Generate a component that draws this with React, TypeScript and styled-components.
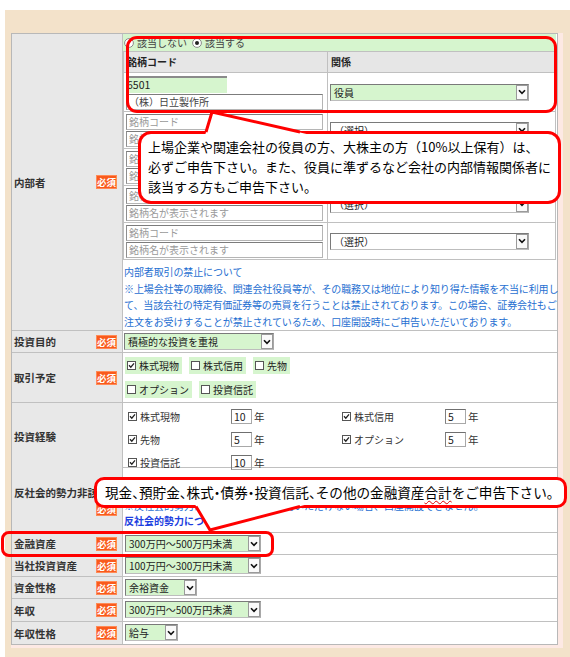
import React from "react";
import styled, { createGlobalStyle } from "styled-components";

const Global = createGlobalStyle`
  *, *::before, *::after { box-sizing: border-box; }
  html, body { margin: 0; padding: 0; background: #fff; }
  body {
    font-family: "Noto Sans CJK JP", "Noto Sans", sans-serif;
    font-size: 10px;
    color: #222;
  }
`;

const GREEN = "#d6f5ce";
const LINE = "#c0c0c0";
const RED = "#ff0000";

const Page = styled.div`
  position: relative;
  width: 570px;
  height: 657px;
  overflow: hidden;
`;

const Frame = styled.div`
  margin: 10px 0 0 5px;
  width: 565px;
  background: #f3e2ca;
  padding: 23px 7px 9px 6px;
`;

const Shadow = styled.div`
  background: #fde9e4;
  padding: 0 5px 3px 0;
`;

const Form = styled.div`
  background: #fff;
  border: 1px solid #b8b8b8;
`;

const Row = styled.div<{ $h: number; $last?: boolean }>`
  display: grid;
  grid-template-columns: 111px 1fr;
  height: ${(p) => p.$h}px;
  border-bottom: ${(p) => (p.$last ? "none" : `1px solid ${LINE}`)};
`;

const Label = styled.div`
  background: #e8e8e8;
  border-right: 1px solid ${LINE};
  display: flex;
  flex-wrap: wrap;
  align-items: center;
  align-content: center;
  row-gap: 2px;
  padding: 0 5px 0 2px;
  font-weight: bold;
  font-size: 10.5px;
  color: #333;
`;

const Badge = styled.span`
  margin-left: auto;
  width: 21px;
  height: 14px;
  background: #f95a1c;
  border: 1px solid #ff8a56;
  color: #fff;
  font-size: 9.5px;
  font-weight: bold;
  line-height: 12px;
  text-align: center;
`;

const Cell = styled.div<{ $pad?: string; $col?: boolean; $end?: boolean }>`
  padding: ${(p) => p.$pad ?? "2px 0 0 2px"};
  display: flex;
  flex-direction: ${(p) => (p.$col ? "column" : "row")};
  justify-content: ${(p) => (p.$end ? "flex-end" : "flex-start")};
  align-items: ${(p) => (p.$col ? "stretch" : "flex-start")};
  min-width: 0;
`;

/* ---------- controls ---------- */

const SelectBox = styled.div<{ $w: number; $green?: boolean }>`
  display: inline-flex;
  width: ${(p) => p.$w}px;
  height: 17px;
  border: 1px solid #7a7a7a;
  border-right-color: #a8a8a8;
  border-bottom-color: #bdbdbd;
  background: ${(p) => (p.$green ? GREEN : "#fff")};
  color: #222;
  font-size: 10px;
  flex: none;
`;

const SelectText = styled.span`
  flex: 1;
  padding-left: 3px;
  line-height: 15px;
  white-space: nowrap;
  overflow: hidden;
`;

const ArrowBox = styled.span`
  width: 12px;
  border: 1px solid #9a9a9a;
  background: #fafafa;
  display: flex;
  align-items: center;
  justify-content: center;
`;

const Select = ({ w, green, children }: { w: number; green?: boolean; children: React.ReactNode }) => (
  <SelectBox $w={w} $green={green}>
    <SelectText>{children}</SelectText>
    <ArrowBox>
      <svg width="8" height="6" viewBox="0 0 8 6">
        <path d="M1 1.2 L4 4.4 L7 1.2" fill="none" stroke="#111" strokeWidth="1.6" />
      </svg>
    </ArrowBox>
  </SelectBox>
);

const TextBox = styled.div<{ $w: number; $ph?: boolean }>`
  width: ${(p) => p.$w}px;
  height: 16px;
  border: 1px solid #b5b5b5;
  border-top-color: #7c7c7c;
  border-left-color: #8e8e8e;
  padding-left: 2px;
  line-height: 14px;
  font-size: 10px;
  color: ${(p) => (p.$ph ? "#9a9a9a" : "#444")};
  white-space: nowrap;
  overflow: hidden;
  background: #fff;
`;

const CodeFilled = styled.div`
  width: 101px;
  height: 17px;
  border-top: 2px solid #8b8b8b;
  background: ${GREEN};
  padding-left: 1px;
  line-height: 14px;
  font-size: 10.5px;
  color: #222;
`;

const YearBox = styled.div`
  width: 21px;
  height: 15px;
  border: 1px solid #a8a8a8;
  border-top-color: #6f6f6f;
  border-left-color: #7f7f7f;
  padding-left: 2px;
  line-height: 13px;
  font-size: 10.5px;
  color: #222;
`;

const CheckIcon = ({ on }: { on?: boolean }) => (
  <svg width="9" height="9" viewBox="0 0 9 9" style={{ flex: "none" }}>
    <rect x="0.5" y="0.5" width="8" height="8" fill="#fff" stroke="#555" />
    {on && <path d="M2 4.3 L3.8 6.2 L7 2.4" fill="none" stroke="#222" strokeWidth="1.3" />}
  </svg>
);

const RadioIcon = ({ on }: { on?: boolean }) => (
  <svg width="10" height="10" viewBox="0 0 10 10" style={{ flex: "none" }}>
    <circle cx="5" cy="5" r="4.4" fill="#fff" stroke="#8a8a8a" />
    {on && <circle cx="5" cy="5" r="2" fill="#222" />}
  </svg>
);

/* ---------- 内部者 ---------- */

const RadioLine = styled.div`
  height: 17px;
  background: ${GREEN};
  display: flex;
  align-items: center;
  gap: 3px;
  padding-left: 1px;
  margin-right: 1px;
  color: #444;
  font-size: 10px;
`;

const RadioText = styled.span`
  margin-right: 2px;
`;

const StockTable = styled.div`
  border: 1px solid ${LINE};
  margin-right: 1px;
  display: grid;
  grid-template-columns: 204px 1fr;
`;

const HeadCell = styled.div<{ $first?: boolean }>`
  height: 21px;
  background: #e6e6e6;
  border-bottom: 1px solid ${LINE};
  border-right: ${(p) => (p.$first ? `1px solid ${LINE}` : "none")};
  font-weight: bold;
  font-size: 10px;
  line-height: 20px;
  padding-left: 3px;
  color: #222;
`;

const StockCell = styled.div<{ $h: number; $first?: boolean; $last?: boolean; $top?: boolean }>`
  height: ${(p) => p.$h}px;
  border-bottom: ${(p) => (p.$last ? "none" : `1px solid ${LINE}`)};
  border-right: ${(p) => (p.$first ? `1px solid ${LINE}` : "none")};
  display: flex;
  flex-direction: column;
  justify-content: ${(p) => (p.$top ? "flex-start" : "center")};
  gap: 1px;
  padding: ${(p) => (p.$top ? "3px 0 0 2px" : "0 0 0 2px")};
`;

const Notice = styled.div`
  padding: 4px 0 0 1px;
  font-size: 10px;
  line-height: 16.5px;
  letter-spacing: -0.12px;
  color: #1f6fd1;
  white-space: nowrap;
`;

/* ---------- 取引予定 / 投資経験 ---------- */

const PillLine = styled.div`
  display: flex;
  gap: 7px;
`;

const PillStack = styled.div`
  display: flex;
  flex-direction: column;
  gap: 7px;
  padding: 4px 0 0 2px;
`;

const Pill = styled.span`
  display: inline-flex;
  align-items: center;
  gap: 3px;
  height: 17px;
  padding: 0 3px 0 2px;
  background: ${GREEN};
  font-size: 10px;
  color: #222;
`;

const ExpGrid = styled.div`
  display: grid;
  grid-template-columns: 214px 214px;
  row-gap: 8px;
  padding: 6px 0 0 5px;
`;

const ExpItem = styled.div`
  display: flex;
  align-items: center;
  height: 15px;
`;

const ExpName = styled.span`
  width: 103px;
  display: flex;
  align-items: center;
  gap: 3px;
  font-size: 10px;
  color: #333;
`;

const Nen = styled.span`
  margin-left: 2px;
  font-size: 10.5px;
  color: #333;
`;

/* ---------- 反社 ---------- */

const AntiText = styled.div<{ $bold?: boolean }>`
  font-size: 10px;
  line-height: 15px;
  color: ${(p) => (p.$bold ? "#1d3fe0" : "#1f6fd1")};
  font-weight: ${(p) => (p.$bold ? "bold" : "normal")};
  white-space: nowrap;
`;

/* ---------- overlays ---------- */

const Highlight = styled.div<{ $x: number; $y: number; $w: number; $h: number; $r: number }>`
  position: absolute;
  left: ${(p) => p.$x}px;
  top: ${(p) => p.$y}px;
  width: ${(p) => p.$w}px;
  height: ${(p) => p.$h}px;
  border: 3px solid ${RED};
  border-radius: ${(p) => p.$r}px;
  pointer-events: none;
`;

const Bubble = styled.div<{
  $x: number;
  $y: number;
  $w: number;
  $h: number;
  $r: number;
  $pad: string;
  $lh: number;
  $fs: number;
}>`
  position: absolute;
  left: ${(p) => p.$x}px;
  top: ${(p) => p.$y}px;
  width: ${(p) => p.$w}px;
  height: ${(p) => p.$h}px;
  border: 3px solid ${RED};
  border-radius: ${(p) => p.$r}px;
  background: #fff;
  padding: ${(p) => p.$pad};
  font-size: ${(p) => p.$fs}px;
  line-height: ${(p) => p.$lh}px;
  color: #000;
  white-space: nowrap;
`;

const TailSvg = styled.svg<{ $x: number; $y: number }>`
  position: absolute;
  left: ${(p) => p.$x}px;
  top: ${(p) => p.$y}px;
  overflow: visible;
`;

const Punct = styled.span`
  font-feature-settings: "halt";
`;

const Wavy = styled.span`
  text-decoration: underline wavy #e00000;
  text-decoration-thickness: 1px;
  text-underline-offset: 2px;
`;

/* ---------- data ---------- */

type SimpleRow = { label: string; value: string; w: number; h: number; last?: boolean };

const simpleRows: SimpleRow[] = [
  { label: "金融資産", value: "300万円～500万円未満", w: 136, h: 22 },
  { label: "当社投資資産", value: "100万円～300万円未満", w: 136, h: 22 },
  { label: "資金性格", value: "余裕資金", w: 72, h: 22 },
  { label: "年収", value: "300万円～500万円未満", w: 136, h: 23 },
  { label: "年収性格", value: "給与", w: 53, h: 22, last: true },
];

const experience = [
  { name: "株式現物", years: "10" },
  { name: "株式信用", years: "5" },
  { name: "先物", years: "5" },
  { name: "オプション", years: "5" },
  { name: "投資信託", years: "10" },
];

const emptyRows = [0, 1, 2, 3];

export default function App() {
  return (
    <Page>
      <Global />
      <Frame>
        <Shadow>
          <Form>
            {/* 内部者 */}
            <Row $h={297}>
              <Label>
                内部者<Badge>必須</Badge>
              </Label>
              <Cell $pad="0 0 0 0" $col>
                <RadioLine>
                  <RadioIcon />
                  <RadioText>該当しない</RadioText>
                  <RadioIcon on />
                  <RadioText>該当する</RadioText>
                </RadioLine>
                <StockTable>
                  <HeadCell $first>銘柄コード</HeadCell>
                  <HeadCell>関係</HeadCell>
                  <StockCell $h={39} $first $top>
                    <CodeFilled>6501</CodeFilled>
                    <TextBox $w={197}>（株）日立製作所</TextBox>
                  </StockCell>
                  <StockCell $h={39}>
                    <Select w={199} green>
                      役員
                    </Select>
                  </StockCell>
                  {emptyRows.map((i) => (
                    <React.Fragment key={i}>
                      <StockCell $h={i === 3 ? 36 : 37} $first $last={i === 3}>
                        <TextBox $w={197} $ph>
                          銘柄コード
                        </TextBox>
                        <TextBox $w={197} $ph>
                          銘柄名が表示されます
                        </TextBox>
                      </StockCell>
                      <StockCell $h={i === 3 ? 36 : 37} $last={i === 3}>
                        <Select w={199}>（選択）</Select>
                      </StockCell>
                    </React.Fragment>
                  ))}
                </StockTable>
                <Notice>
                  内部者取引の禁止について
                  <br />
                  ※上場会社等の取締役、関連会社役員等が、その職務又は地位により知り得た情報を不当に利用し
                  <br />
                  て、当該会社の特定有価証券等の売買を行うことは禁止されております。この場合、証券会社もご
                  <br />
                  注文をお受けすることが禁止されているため、口座開設時にご申告いただいております。
                </Notice>
              </Cell>
            </Row>

            {/* 投資目的 */}
            <Row $h={22}>
              <Label>
                投資目的<Badge>必須</Badge>
              </Label>
              <Cell $pad="2px 0 0 1px">
                <Select w={150} green>
                  積極的な投資を重視
                </Select>
              </Cell>
            </Row>

            {/* 取引予定 */}
            <Row $h={50}>
              <Label>
                取引予定<Badge>必須</Badge>
              </Label>
              <PillStack>
                <PillLine>
                  <Pill>
                    <CheckIcon on />
                    株式現物
                  </Pill>
                  <Pill>
                    <CheckIcon />
                    株式信用
                  </Pill>
                  <Pill>
                    <CheckIcon />
                    先物
                  </Pill>
                </PillLine>
                <PillLine>
                  <Pill>
                    <CheckIcon />
                    オプション
                  </Pill>
                  <Pill>
                    <CheckIcon />
                    投資信託
                  </Pill>
                </PillLine>
              </PillStack>
            </Row>

            {/* 投資経験 */}
            <Row $h={65}>
              <Label>投資経験</Label>
              <ExpGrid>
                {experience.map((e) => (
                  <ExpItem key={e.name}>
                    <ExpName>
                      <CheckIcon on />
                      {e.name}
                    </ExpName>
                    <YearBox>{e.years}</YearBox>
                    <Nen>年</Nen>
                  </ExpItem>
                ))}
              </ExpGrid>
            </Row>

            {/* 反社会的勢力 */}
            <Row $h={65}>
              <Label>
                反社会的勢力非該当<Badge>必須</Badge>
              </Label>
              <Cell $col $end $pad="0 0 4px 1px">
                <AntiText>※反社会的勢力に該当しない旨を確約いただけない場合、口座開設できません。</AntiText>
                <AntiText $bold>反社会的勢力について</AntiText>
              </Cell>
            </Row>

            {simpleRows.map((r) => (
              <Row key={r.label} $h={r.h} $last={r.last}>
                <Label>
                  {r.label}
                  <Badge>必須</Badge>
                </Label>
                <Cell>
                  <Select w={r.w} green>
                    {r.value}
                  </Select>
                </Cell>
              </Row>
            ))}
          </Form>
        </Shadow>
      </Frame>

      {/* callout 1 */}
      <Highlight $x={126} $y={36} $w={431} $h={77} $r={11} />
      <Bubble $x={138} $y={131} $w={423} $h={73} $r={13} $pad="3px 0 0 7px" $lh={20} $fs={13}>
        上場企業や関連会社の役員の方、大株主の方（10%以上保有）は、
        <br />
        必ずご申告下さい。また、役員に準ずるなど会社の内部情報関係者に
        <br />
        該当する方もご申告下さい。
      </Bubble>
      <TailSvg $x={200} $y={108} width="130" height="30">
        <path d="M5 27.5 L12 4 L113 27.5 Z" fill="#fff" />
        <path d="M6 24 L12 4 L100 24" fill="none" stroke={RED} strokeWidth="3" strokeLinejoin="miter" />
      </TailSvg>

      {/* callout 2 */}
      <Highlight $x={1} $y={531} $w={273} $h={26} $r={8} />
      <Bubble $x={94} $y={477} $w={473} $h={31} $r={10} $pad="0 0 0 8px" $lh={25} $fs={13.6}>
        現金<Punct>、</Punct>預貯金<Punct>、</Punct>株式<Punct>・</Punct>債券<Punct>・</Punct>投資信託
        <Punct>、</Punct>その他の金融資産<Wavy>合計</Wavy>をご申告下さい<Punct>。</Punct>
      </Bubble>
      <TailSvg $x={190} $y={500} width="130" height="34">
        <path d="M3.9 2.5 L20 30 L124 2.5 Z" fill="#fff" />
        <path d="M6 6.5 L20 30 L110 6.5" fill="none" stroke={RED} strokeWidth="3" strokeLinejoin="miter" />
      </TailSvg>
    </Page>
  );
}
